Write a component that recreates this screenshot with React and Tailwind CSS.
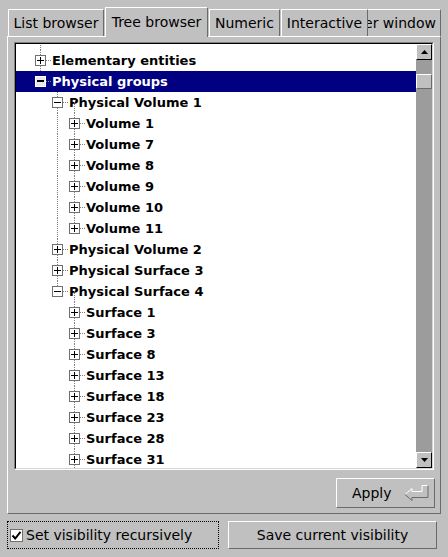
import React from "react";

// tree rows: level, open state and which guide lines cross the row
const tree = [
  { label: "", level: 0, ghost: true, guides: [[0, "full"]] },
  { label: "Elementary entities", level: 0, open: false, guides: [[0, "full"]] },
  { label: "Physical groups", level: 0, open: true, selected: true, guides: [] },
  { label: "Physical Volume 1", level: 1, open: true, guides: [[1, "full"], [2, "bottom"]] },
  ...["1", "7", "8", "9", "10"].map((n) => ({
    label: `Volume ${n}`,
    level: 2,
    open: false,
    guides: [[1, "full"], [2, "full"]],
  })),
  { label: "Volume 11", level: 2, open: false, guides: [[1, "full"], [2, "top"]] },
  { label: "Physical Volume 2", level: 1, open: false, guides: [[1, "full"]] },
  { label: "Physical Surface 3", level: 1, open: false, guides: [[1, "full"]] },
  { label: "Physical Surface 4", level: 1, open: true, guides: [[1, "top"], [2, "bottom"]] },
  ...["1", "3", "8", "13", "18", "23", "28", "31"].map((n) => ({
    label: `Surface ${n}`,
    level: 2,
    open: false,
    guides: [[2, "full"]],
  })),
];

const indent = ["w-[19px]", "w-[36px]", "w-[53px]"];
const lineX = ["left-[24px]", "left-[41px]", "left-[58px]"];
const linePart = {
  full: "top-0 h-[21px]",
  top: "top-0 h-[11px]",
  bottom: "top-[10px] h-[11px]",
};

const vDots =
  "absolute w-px bg-[image:repeating-linear-gradient(to_bottom,#808080_0px,#808080_1px,transparent_1px,transparent_2px)]";
const hDots =
  "h-px bg-[image:repeating-linear-gradient(to_right,#808080_0px,#808080_1px,transparent_1px,transparent_2px)]";

const upBox =
  "border border-t-white border-l-white border-r-[#6b6b6b] border-b-[#6b6b6b] bg-[#c0c0c0]";

function Tab({ label, className, selected, right }) {
  return (
    <div
      className={`flex ${right ? "justify-end pr-[4px]" : "justify-center"} border-t border-l border-r border-t-white border-l-white border-r-[#6b6b6b] bg-[#c0c0c0] text-[14px] leading-[16px] text-black whitespace-nowrap ${
        selected ? "h-[30px] -mb-px pt-[6px] relative z-20" : "h-[27px] pt-[5px]"
      } ${className}`}
    >
      {label}
    </div>
  );
}

function ExpandBox({ open, selected }) {
  return (
    <div
      className={`relative w-[11px] h-[11px] border shrink-0 ${
        selected ? "border-white bg-[#e8e8e8]" : "border-[#707070] bg-white"
      }`}
    >
      {selected ? (
        <div className="absolute left-[1px] top-[3px] w-[7px] h-[2px] bg-black" />
      ) : (
        <div className="absolute left-[1px] top-[4px] w-[7px] h-px bg-black" />
      )}
      {!open && <div className="absolute left-[4px] top-[1px] w-px h-[7px] bg-black" />}
    </div>
  );
}

function TreeRow({ row }) {
  return (
    <div
      className={`relative h-[21px] flex items-center ${
        row.selected ? "bg-[#000080] text-white" : "text-black"
      }`}
    >
      {row.guides.map(([lvl, part], i) => (
        <div key={i} className={`${vDots} ${lineX[lvl]} ${linePart[part]}`} />
      ))}
      {!row.ghost && (
        <>
          <div className={`${indent[row.level]} shrink-0`} />
          <ExpandBox open={row.open} selected={row.selected} />
          <div className={`${hDots} w-[6px] shrink-0 relative z-10`} />
          <span className="font-bold text-[13px] leading-[21px] whitespace-nowrap">{row.label}</span>
        </>
      )}
    </div>
  );
}

function ScrollButton({ down }) {
  return (
    <div className="h-[16px] w-full flex items-center justify-center border border-t-white border-l-white border-r-black border-b-black bg-[#c0c0c0]">
      <svg width="7" height="4" viewBox="0 0 7 4">
        <polygon points={down ? "0,0 7,0 3.5,4" : "0,4 3.5,0 7,4"} fill="#000" />
      </svg>
    </div>
  );
}

export default function App() {
  return (
    <div className="w-[448px] h-[557px] bg-[#c0c0c0] pt-[7px] overflow-hidden font-['DejaVu_Sans','Liberation_Sans',sans-serif]">
      {/* tabs */}
      <div className="flex items-end h-[29px] pl-[8px]">
        <Tab label="List browser" className="w-[96px]" />
        <Tab label="Tree browser" className="w-[103px] ml-px" selected />
        <Tab label="Numeric" className="w-[71px] ml-px" />
        <Tab label="Interactive" className="w-[87px] ml-px relative z-10" />
        <Tab label="Per window" className="w-[90px] -ml-[17px] relative z-0" right />
      </div>

      {/* tab panel */}
      <div className="ml-[7px] w-[434px] h-[478px] border border-t-white border-l-white border-r-[#6b6b6b] border-b-[#6b6b6b] flex flex-col">
        <div className="mt-[5px] ml-[6px] w-[420px] h-[428px] border border-t-[#808080] border-l-[#808080] border-r-white border-b-white">
          <div className="w-full h-full border border-t-black border-l-black border-r-[#d4d4d4] border-b-[#d4d4d4] bg-white flex">
            <div className="flex-1 overflow-hidden">
              <div className="-mt-[15px]">
                {tree.map((row, i) => (
                  <TreeRow key={i} row={row} />
                ))}
              </div>
            </div>
            <div className="w-[16px] bg-[#9c9c9c] flex flex-col">
              <ScrollButton />
              <div className={`${upBox} mt-[14px] h-[15px] w-full`} />
              <div className="flex-1" />
              <ScrollButton down />
            </div>
          </div>
        </div>

        <div className="mt-[8px] flex justify-end pr-[5px]">
          <button className={`${upBox} w-[99px] h-[30px] flex items-center pl-[15px] text-[14px] text-black`}>
            <span>Apply</span>
            <svg className="ml-[12px]" width="25" height="17" viewBox="0 0 25 17">
              <polyline points="1,9.5 8,3.5 8,6.5 18,6.5 18,0.5 24,0.5" fill="none" stroke="#ffffff" strokeWidth="1" />
              <polyline points="24,0.5 24,12.5 8,12.5 8,15.5 1,9.5" fill="none" stroke="#6b6b6b" strokeWidth="1" />
            </svg>
          </button>
        </div>
      </div>

      {/* bottom row */}
      <div className="mt-[7px] flex items-center">
        <label className="ml-[7px] w-[212px] h-[28px] border border-dotted border-black flex items-center text-[14px] text-black">
          <span className="ml-[2px] w-[13px] h-[13px] border border-[#707070] bg-white flex items-center justify-center">
            <svg width="11" height="11" viewBox="0 0 11 11">
              <path d="M1.5 5.5 L4.2 8.5 L9.5 1.8" fill="none" stroke="#000" strokeWidth="2" />
            </svg>
          </span>
          <span className="ml-[3px] whitespace-nowrap">Set visibility recursively</span>
        </label>
        <button className={`${upBox} ml-[9px] w-[209px] h-[28px] flex items-center justify-center text-[14px] text-black`}>
          Save current visibility
        </button>
      </div>
    </div>
  );
}
